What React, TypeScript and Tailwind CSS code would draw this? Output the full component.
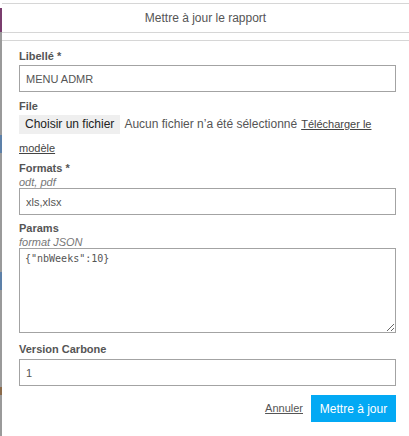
import { useState } from 'react'

const font = { fontFamily: '"Liberation Sans", Arial, sans-serif' }

function Label({ children, className = '' }: { children: React.ReactNode; className?: string }) {
  return <div className={`text-[11px] font-bold leading-[15px] text-[#555] ${className}`}>{children}</div>
}

function Hint({ children }: { children: React.ReactNode }) {
  return <div className="text-[11px] italic leading-[12px] text-[#777]">{children}</div>
}

export default function App() {
  const [label, setLabel] = useState('MENU ADMR')
  const [formats, setFormats] = useState('xls,xlsx')
  const [params, setParams] = useState('{"nbWeeks":10}')
  const [version, setVersion] = useState('1')

  return (
    <div className="flex h-[436px] w-[409px] overflow-hidden bg-white" style={font}>
      {/* page behind the modal */}
      <div className="flex w-[2px] flex-col bg-[#9a9a9a]">
        <div className="h-[8px] bg-white" />
        <div className="h-[24px] bg-[#7a3d6e]" />
        <div className="h-[103px]" />
        <div className="h-[18px] bg-[#5d80a8]" />
        <div className="h-[119px]" />
        <div className="h-[18px] bg-[#5d80a8]" />
        <div className="h-[97px]" />
        <div className="h-[8px] bg-[#8a6a4a]" />
      </div>

      <div className="flex flex-1 flex-col pt-[3px]">
        <div className="flex h-[30px] items-center justify-center border-y border-[#d6d6d6] text-[12px] text-[#555]">
          Mettre à jour le rapport
        </div>

        <div className="mt-[7px] flex flex-col border-t border-[#d6d6d6] pl-[17px] pr-[13px] pt-[8px]">
          <Label>Libellé *</Label>
          <input
            value={label}
            onChange={e => setLabel(e.target.value)}
            className="mt-[1px] h-[27px] w-full border border-[#a3a3a3] px-[6px] text-[11px] text-[#555] outline-none"
          />

          <Label className="mt-[7px]">File</Label>
          <div className="flex h-[20px] items-center text-[12px]">
            <span className="flex h-[19px] items-center bg-[#efefef] px-[6px] text-[#222]">Choisir un fichier</span>
            <span className="ml-[4px] text-[#555]">Aucun fichier n’a été sélectionné</span>
            <a href="#" className="ml-[4px] text-[11px] text-[#444] underline">Télécharger le</a>
          </div>
          <a href="#" className="mt-[7px] self-start text-[11px] leading-[15px] text-[#444] underline">modèle</a>

          <Label className="mt-[5px]">Formats *</Label>
          <Hint>odt, pdf</Hint>
          <input
            value={formats}
            onChange={e => setFormats(e.target.value)}
            className="h-[27px] w-full border border-[#a3a3a3] px-[6px] text-[11px] text-[#555] outline-none"
          />

          <Label className="mt-[6px]">Params</Label>
          <Hint>format JSON</Hint>
          <textarea
            value={params}
            onChange={e => setParams(e.target.value)}
            className="block h-[85px] w-full resize border border-[#a3a3a3] px-[5px] py-[3px] text-[10px] leading-[14px] text-[#555] outline-none"
            style={{ fontFamily: '"DejaVu Sans Mono", "Liberation Mono", monospace' }}
          />

          <Label className="mt-[9px]">Version Carbone</Label>
          <input
            value={version}
            onChange={e => setVersion(e.target.value)}
            className="mt-[2px] h-[27px] w-full border border-[#a3a3a3] px-[6px] text-[11px] text-[#555] outline-none"
          />

          <div className="mt-[9px] flex items-center justify-end gap-[8px]">
            <a href="#" className="text-[11px] text-[#555] underline">Annuler</a>
            <button className="h-[27px] w-[85px] bg-[#03a9f4] text-[12px] text-white">Mettre à jour</button>
          </div>
        </div>
      </div>
    </div>
  )
}
